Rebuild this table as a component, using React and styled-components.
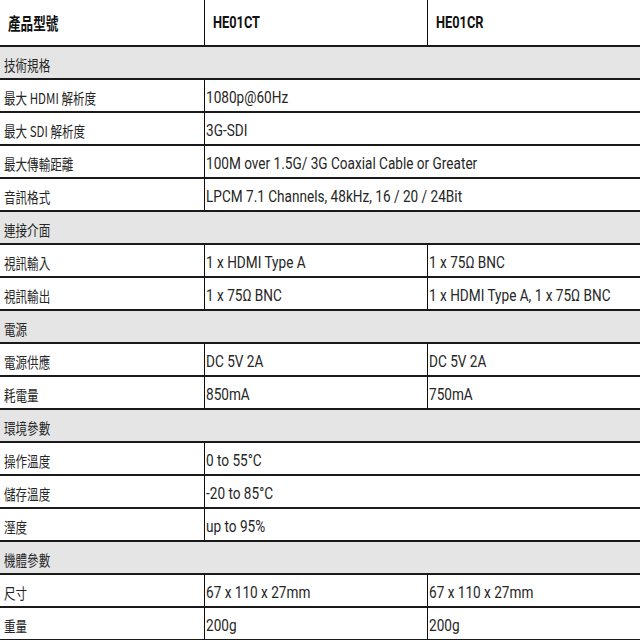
import React from "react";
import styled, { createGlobalStyle } from "styled-components";

const Global = createGlobalStyle`
  html, body { margin: 0; padding: 0; background: #fff; }
  body { font-family: Roboto, "Noto Sans CJK TC", sans-serif; color: #262626; overflow: hidden; }
`;

const Sheet = styled.div`
  width: 640px;
  display: flex;
  flex-direction: column;
`;

const Row = styled.div`
  display: grid;
  grid-template-columns: 204px 223px 1fr;
  height: ${(p) => (p.$head ? 47 : 33)}px;
  box-sizing: border-box;
  border-bottom: 2px solid #1a1a1a;
  background: ${(p) => (p.$section ? "#e5e5e5" : "#fff")};
`;

const Cell = styled.div`
  display: flex;
  align-items: center;
  box-sizing: border-box;
  min-width: 0;
  white-space: nowrap;
  padding-left: ${(p) => (p.$head ? 8 : p.$first ? 4 : 1)}px;
  padding-top: ${(p) => (p.$head ? 0 : 4)}px;
  border-left: ${(p) => (p.$first ? "none" : "1px solid #0d0d0d")};
  grid-column: ${(p) => (p.$span ? `span ${p.$span}` : "auto")};
`;

const Txt = styled.span`
  display: inline-block;
  transform: scaleX(${(p) => (p.$cjk ? (p.$head ? 0.74 : 0.77) : 0.8)});
  transform-origin: left center;
  font-family: ${(p) =>
    p.$cjk
      ? `"Noto Sans CJK TC", sans-serif`
      : `Roboto, "Noto Sans CJK TC", sans-serif`};
  font-size: ${(p) => (p.$head ? (p.$cjk ? 17 : 16) : p.$cjk ? 15 : 17)}px;
  font-weight: ${(p) => (p.$head ? 700 : 400)};
  color: ${(p) => (p.$head ? "#111" : "#262626")};
  line-height: 1;
`;

const rows = [
  { section: "技術規格" },
  { label: "最大 HDMI 解析度", v: ["1080p@60Hz"] },
  { label: "最大 SDI 解析度", v: ["3G-SDI"] },
  { label: "最大傳輸距離", v: ["100M over 1.5G/ 3G Coaxial Cable or Greater"] },
  { label: "音訊格式", v: ["LPCM 7.1 Channels, 48kHz, 16 / 20 / 24Bit"] },
  { section: "連接介面" },
  { label: "視訊輸入", v: ["1 x HDMI Type A", "1 x 75Ω BNC"] },
  { label: "視訊輸出", v: ["1 x 75Ω BNC", "1 x HDMI Type A, 1 x 75Ω BNC"] },
  { section: "電源" },
  { label: "電源供應", v: ["DC 5V 2A", "DC 5V 2A"] },
  { label: "耗電量", v: ["850mA", "750mA"] },
  { section: "環境參數" },
  { label: "操作溫度", v: ["0 to 55°C"] },
  { label: "儲存溫度", v: ["-20 to 85°C"] },
  { label: "溼度", v: ["up to 95%"] },
  { section: "機體參數" },
  { label: "尺寸", v: ["67 x 110 x 27mm", "67 x 110 x 27mm"] },
  { label: "重量", v: ["200g", "200g"] },
];

export default function App() {
  return (
    <>
      <Global />
      <Sheet>
        <Row $head>
          <Cell $head $first>
            <Txt $head $cjk>產品型號</Txt>
          </Cell>
          <Cell $head>
            <Txt $head>HE01CT</Txt>
          </Cell>
          <Cell $head>
            <Txt $head>HE01CR</Txt>
          </Cell>
        </Row>
        {rows.map((r, i) =>
          r.section ? (
            <Row key={i} $section>
              <Cell $first $span={3}>
                <Txt $cjk>{r.section}</Txt>
              </Cell>
            </Row>
          ) : (
            <Row key={i}>
              <Cell $first>
                <Txt $cjk>{r.label}</Txt>
              </Cell>
              {r.v.map((val, j) => (
                <Cell key={j} $span={r.v.length === 1 ? 2 : undefined}>
                  <Txt>{val}</Txt>
                </Cell>
              ))}
            </Row>
          )
        )}
      </Sheet>
    </>
  );
}
